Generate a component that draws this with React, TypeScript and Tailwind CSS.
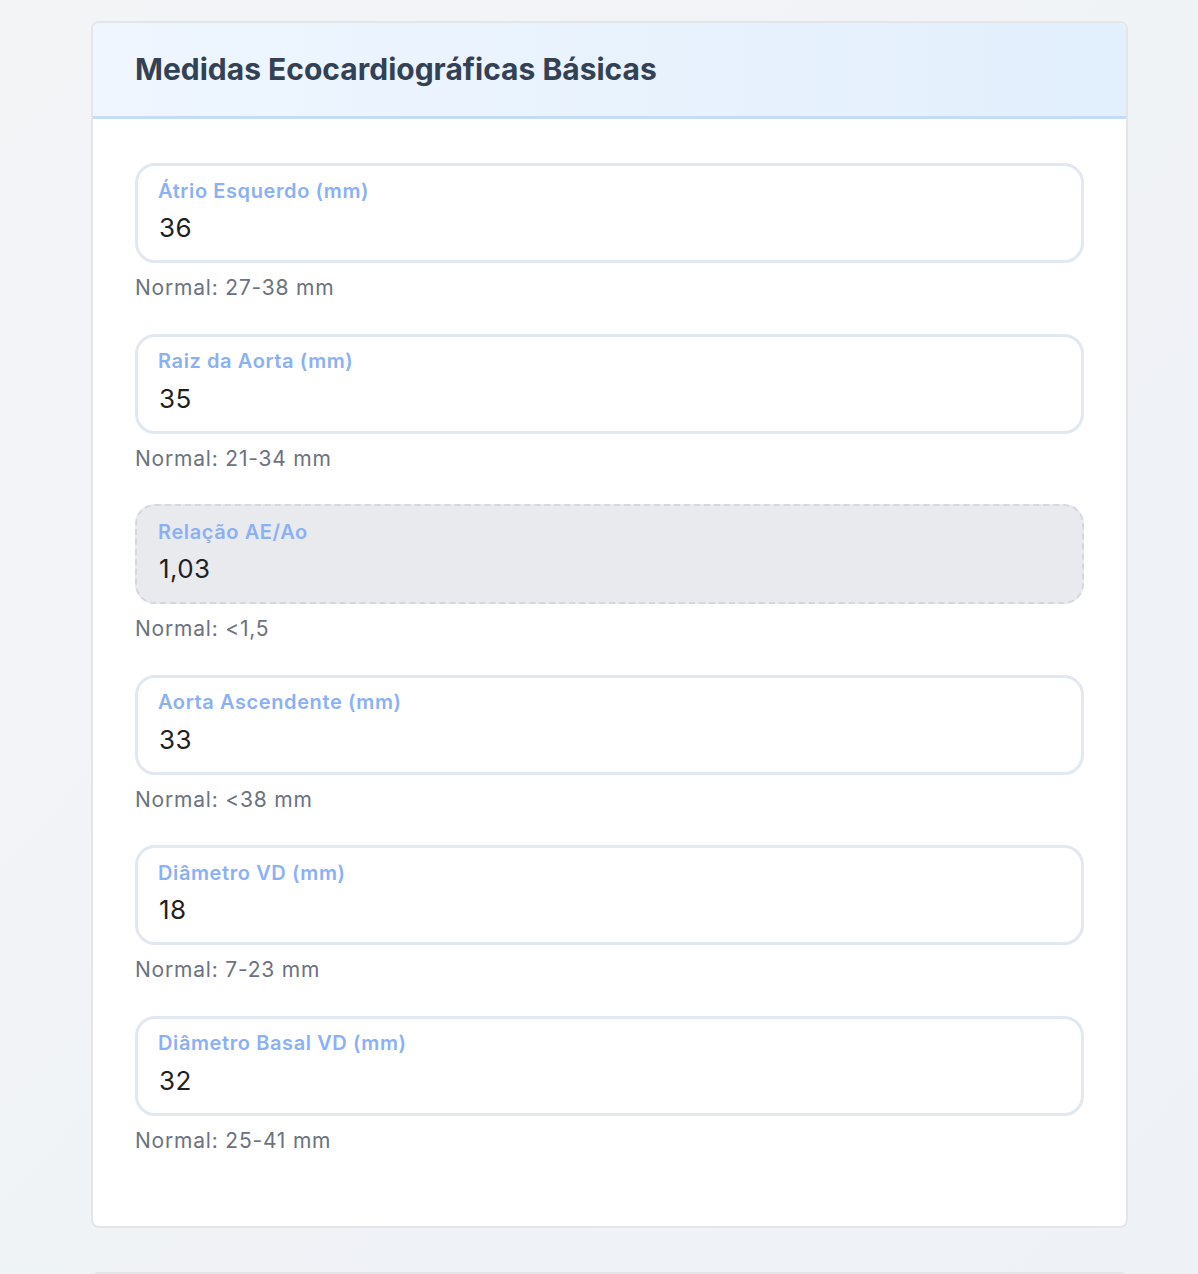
const fields = [
  { label: "Átrio Esquerdo (mm)", value: "36", normal: "Normal: 27-38 mm" },
  { label: "Raiz da Aorta (mm)", value: "35", normal: "Normal: 21-34 mm" },
  { label: "Relação AE/Ao", value: "1,03", normal: "Normal: <1,5", readOnly: true },
  { label: "Aorta Ascendente (mm)", value: "33", normal: "Normal: <38 mm" },
  { label: "Diâmetro VD (mm)", value: "18", normal: "Normal: 7-23 mm" },
  { label: "Diâmetro Basal VD (mm)", value: "32", normal: "Normal: 25-41 mm" },
];

function Field({ label, value, normal, readOnly }: { label: string; value: string; normal: string; readOnly?: boolean }) {
  return (
    <div className="mb-[30px]">
      {/* Floating label input */}
      <div
        className={
          readOnly
            ? "h-[100px] rounded-[20px] border-2 border-dashed border-[#d4d7dd] bg-[#e9eaee] px-[21px] pt-[14.5px]"
            : "h-[100px] rounded-[20px] border-[3px] border-[#e2e8f0] bg-white px-[20px] pt-[13.5px]"
        }
      >
        <div className="text-[20px] leading-[23px] font-semibold tracking-[0.6px] text-[#8ab0f5]">{label}</div>
        <div className="mt-[9.5px] text-[26px] leading-[32px] tracking-[0.4px] text-[#1f1f1f] pl-[1px]">{value}</div>
      </div>
      <div className="mt-[10px] text-[21px] leading-[30.5px] tracking-[0.8px] text-[#6b7280]">{normal}</div>
    </div>
  );
}

export default function App() {
  return (
    <div className="min-h-[1274px] bg-gradient-to-br from-[#f3f4f6] to-[#eef2f7] pt-[21px] font-['Inter',sans-serif]">
      <div className="ml-[91px] w-[1037px] rounded-lg border-2 border-[#e3e5e9] bg-white overflow-hidden">
        {/* Header */}
        <div className="bg-gradient-to-r from-[#eff6ff] to-[#e2effc] border-b-[3px] border-[#c4dcf7] px-[42px] pt-[29px] pb-[29px]">
          <h2 className="text-[30px] leading-[35px] font-bold text-[#334155]">
            Medidas Ecocardiográficas Básicas
          </h2>
        </div>

        {/* Body */}
        <div className="px-[42px] pt-[44px] pb-[40px]">
          {fields.map((f) => (
            <Field key={f.label} {...f} />
          ))}
        </div>
      </div>

      <div className="ml-[91px] mt-[44px] w-[1037px] h-[40px] rounded-t-lg border-2 border-b-0 border-[#e3e5e9] bg-white"></div>
    </div>
  );
}
